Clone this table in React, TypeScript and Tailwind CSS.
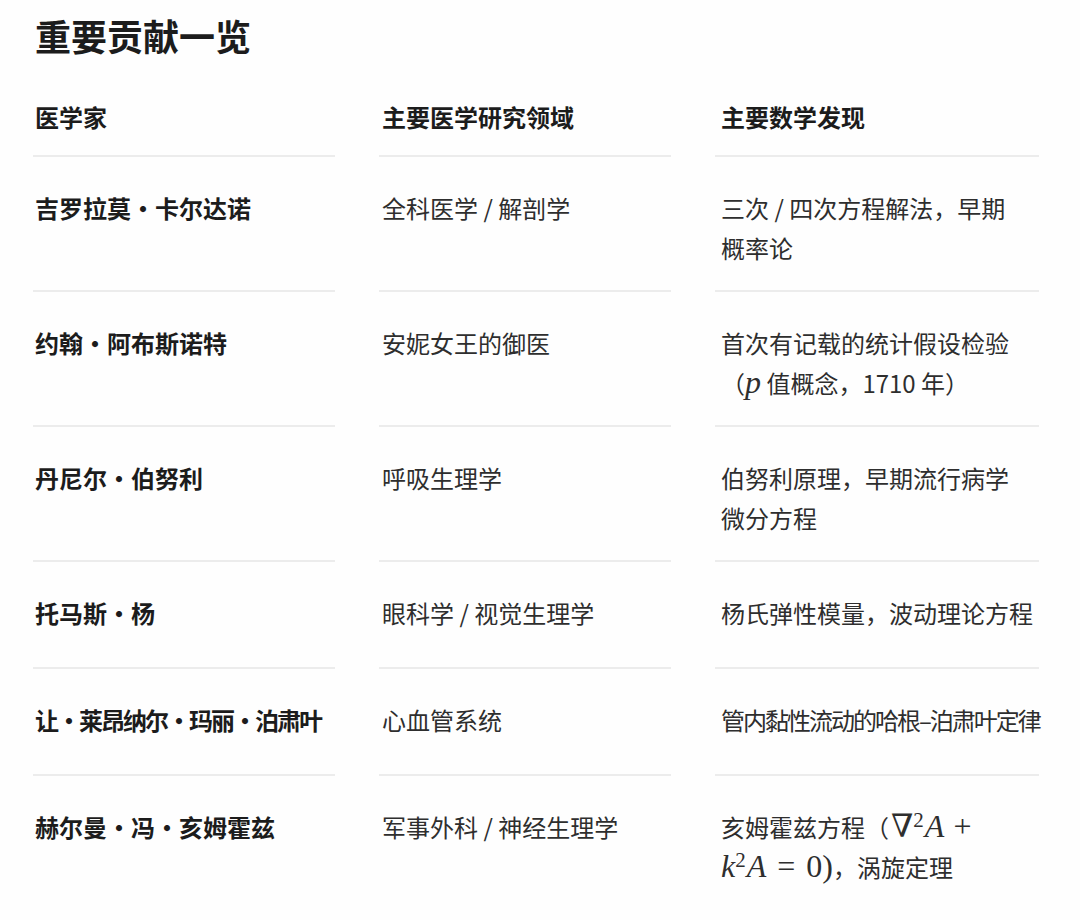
import { Fragment, type ReactNode } from "react";

const cjk = { fontFamily: '"Noto Sans CJK SC", "Noto Sans", sans-serif' };

const M = ({ children, i = false, className = "" }: { children: ReactNode; i?: boolean; className?: string }) => (
  <span
    className={`text-[32px] leading-none ${i ? "italic" : ""} ${className}`}
    style={{ fontFamily: '"Liberation Serif", "DejaVu Serif", serif' }}
  >
    {children}
  </span>
);

type Row = { name: string; field: string; math: ReactNode; tight?: boolean };

const rows: Row[] = [
  {
    name: "吉罗拉莫·卡尔达诺",
    field: "全科医学 / 解剖学",
    math: (
      <>
        三次 / 四次方程解法，早期
        <br />
        概率论
      </>
    ),
  },
  {
    name: "约翰·阿布斯诺特",
    field: "安妮女王的御医",
    math: (
      <>
        首次有记载的统计假设检验
        <br />（<M i className="text-[28px]">p</M> 值概念，1710 年）
      </>
    ),
  },
  {
    name: "丹尼尔·伯努利",
    field: "呼吸生理学",
    math: (
      <>
        伯努利原理，早期流行病学
        <br />
        微分方程
      </>
    ),
  },
  { name: "托马斯·杨", field: "眼科学 / 视觉生理学", math: "杨氏弹性模量，波动理论方程" },
  {
    name: "让·莱昂纳尔·玛丽·泊肃叶",
    field: "心血管系统",
    math: "管内黏性流动的哈根–泊肃叶定律",
    tight: true,
  },
  {
    name: "赫尔曼·冯·亥姆霍兹",
    field: "军事外科 / 神经生理学",
    math: (
      <>
        亥姆霍兹方程（
        <M className="ml-[2px]">
          ∇<sup className="text-[21px]">2</sup>
        </M>
        <M i className="ml-[1px]">A</M>
        <M className="ml-[9px]">+</M>
        <br />
        <M i>k</M>
        <M>
          <sup className="text-[21px]">2</sup>
        </M>
        <M i className="ml-[1px]">A</M>
        <M className="mx-[11px]">=</M>
        <M>0)</M>，涡旋定理
      </>
    ),
  },
];

const pads = ["pl-[2px]", "pl-[3px]", "pl-[6px]"];

export default function App() {
  return (
    <div className="min-h-screen bg-[#fefefe] pl-[33px] pt-[13px] text-[#2e2e2e]" style={cjk}>
      <h1 className="pl-[2px] text-[36px] font-bold leading-[44px] text-[#1c1c1c]">重要贡献一览</h1>

      <div className="mt-[40px] grid grid-cols-[302px_292px_324px] gap-x-[44px] text-[24px] leading-[40px]">
        {["医学家", "主要医学研究领域", "主要数学发现"].map((h, i) => (
          <div
            key={h}
            className={`border-b-2 border-[#ececec] whitespace-nowrap ${pads[i]} pb-[18px] font-semibold text-[#1c1c1c]`}
          >
            {h}
          </div>
        ))}

        {rows.map((r, idx) => {
          const last = idx === rows.length - 1;
          const cell = `whitespace-nowrap min-h-[107px] pt-[31px] pb-[22px] ${
            last ? "" : "border-b-2 border-[#ececec]"
          }`;
          return (
            <Fragment key={r.name}>
              <div
                className={`${cell} ${pads[0]} font-semibold text-[#1c1c1c] ${r.tight ? "tracking-[-2px]" : ""}`}
              >
                {r.name}
              </div>
              <div className={`${cell} ${pads[1]}`}>{r.field}</div>
              <div className={`${cell} ${pads[2]} ${r.tight ? "tracking-[-2px]" : ""}`}>{r.math}</div>
            </Fragment>
          );
        })}
      </div>
    </div>
  );
}
